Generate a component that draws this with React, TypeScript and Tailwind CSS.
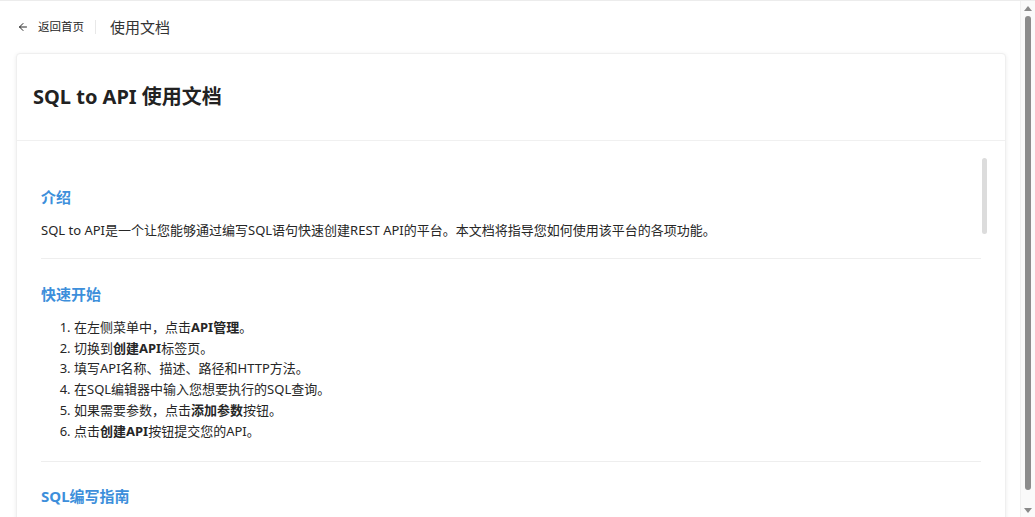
import { ArrowLeft } from "lucide-react";

// --- Data ---
const STEPS: { parts: { text: string; bold?: boolean }[] }[] = [
  { parts: [{ text: "在左侧菜单中，点击" }, { text: "API管理", bold: true }, { text: "。" }] },
  { parts: [{ text: "切换到" }, { text: "创建API", bold: true }, { text: "标签页。" }] },
  { parts: [{ text: "填写API名称、描述、路径和HTTP方法。" }] },
  { parts: [{ text: "在SQL编辑器中输入您想要执行的SQL查询。" }] },
  { parts: [{ text: "如果需要参数，点击" }, { text: "添加参数", bold: true }, { text: "按钮。" }] },
  { parts: [{ text: "点击" }, { text: "创建API", bold: true }, { text: "按钮提交您的API。" }] },
];

const SectionTitle = ({ children }: { children: React.ReactNode }) => (
  <h3 className="text-[15px] font-bold text-[#3d8fdb] leading-6 mb-[11px]">
    {children}
  </h3>
);

// Browser-style scrollbar drawn in the page (headless shots hide the real one)
const PageScrollbar = () => (
  <div className="w-[15px] shrink-0 bg-[#fafafa] border-l border-[#f0f0f0] flex flex-col items-center">
    <svg width="8" height="5" viewBox="0 0 8 5" className="mt-[5px] shrink-0">
      <path d="M0 5 L4 0 L8 5 Z" fill="#8a8a8a" />
    </svg>
    <div className="mt-[5px] w-[6px] h-[474px] rounded-full bg-[#8c8c8c]" />
    <div className="flex-1" />
    <svg width="8" height="5" viewBox="0 0 8 5" className="mb-[4px] shrink-0">
      <path d="M0 0 L8 0 L4 5 Z" fill="#8a8a8a" />
    </svg>
  </div>
);

export default function App() {
  return (
    <main
      className="h-screen flex overflow-hidden bg-white text-[#262626] border-t border-[#ececec]"
      style={{ fontFamily: '"Noto Sans", "Noto Sans CJK SC", sans-serif' }}
    >
      <div className="flex-1 min-w-0 flex flex-col">
        {/* Top bar */}
        <header className="h-[52px] shrink-0 flex items-center pl-[17px]">
          <button className="flex items-center gap-[9px] text-[11.5px] text-[#262626]">
            <ArrowLeft className="w-[12px] h-[12px]" strokeWidth={2} />
            <span>返回首页</span>
          </button>
          <div className="w-px h-[14px] bg-[#e8e8e8] ml-[11px] mr-[14px]" />
          <span className="text-[15px] text-[#333]">使用文档</span>
        </header>

        {/* Card */}
        <div className="ml-4 mr-[14px] h-[483px] shrink-0 flex flex-col bg-white border border-[#efefef] rounded-[4px] shadow-[0_1px_4px_rgba(0,0,0,0.08)]">
          <div className="h-[87px] shrink-0 flex items-center px-4 border-b border-[#f0f0f0]">
            <h2 className="text-[20px] font-bold text-[#222]">SQL to API 使用文档</h2>
          </div>

          <div className="flex-1 min-h-0 flex pl-6 pr-4 pt-4">
            <div className="flex-1 min-w-0 overflow-hidden">
              <section className="pt-[28px] pb-[17px] border-b border-[#eeeeee]">
                <SectionTitle>介绍</SectionTitle>
                <p className="text-[13px] leading-[20.8px]">
                  SQL to API是一个让您能够通过编写SQL语句快速创建REST API的平台。本文档将指导您如何使用该平台的各项功能。
                </p>
              </section>

              <section className="pt-[23px] pb-[19px] border-b border-[#eeeeee]">
                <SectionTitle>快速开始</SectionTitle>
                <ol className="list-decimal pl-[33px] text-[13px] leading-[20.8px]">
                  {STEPS.map((step, i) => (
                    <li key={i}>
                      {step.parts.map((p, j) =>
                        p.bold ? (
                          <strong key={j} className="font-bold">
                            {p.text}
                          </strong>
                        ) : (
                          <span key={j}>{p.text}</span>
                        ),
                      )}
                    </li>
                  ))}
                </ol>
              </section>

              <section className="pt-[22px] pb-[19px]">
                <SectionTitle>SQL编写指南</SectionTitle>
              </section>
            </div>

            {/* Inner scrollbar */}
            <div className="w-[8px] shrink-0">
              <div className="mt-px ml-px w-[5px] h-[76px] rounded-full bg-[#dcdcdc]" />
            </div>
          </div>
        </div>
      </div>

      <PageScrollbar />
    </main>
  );
}
